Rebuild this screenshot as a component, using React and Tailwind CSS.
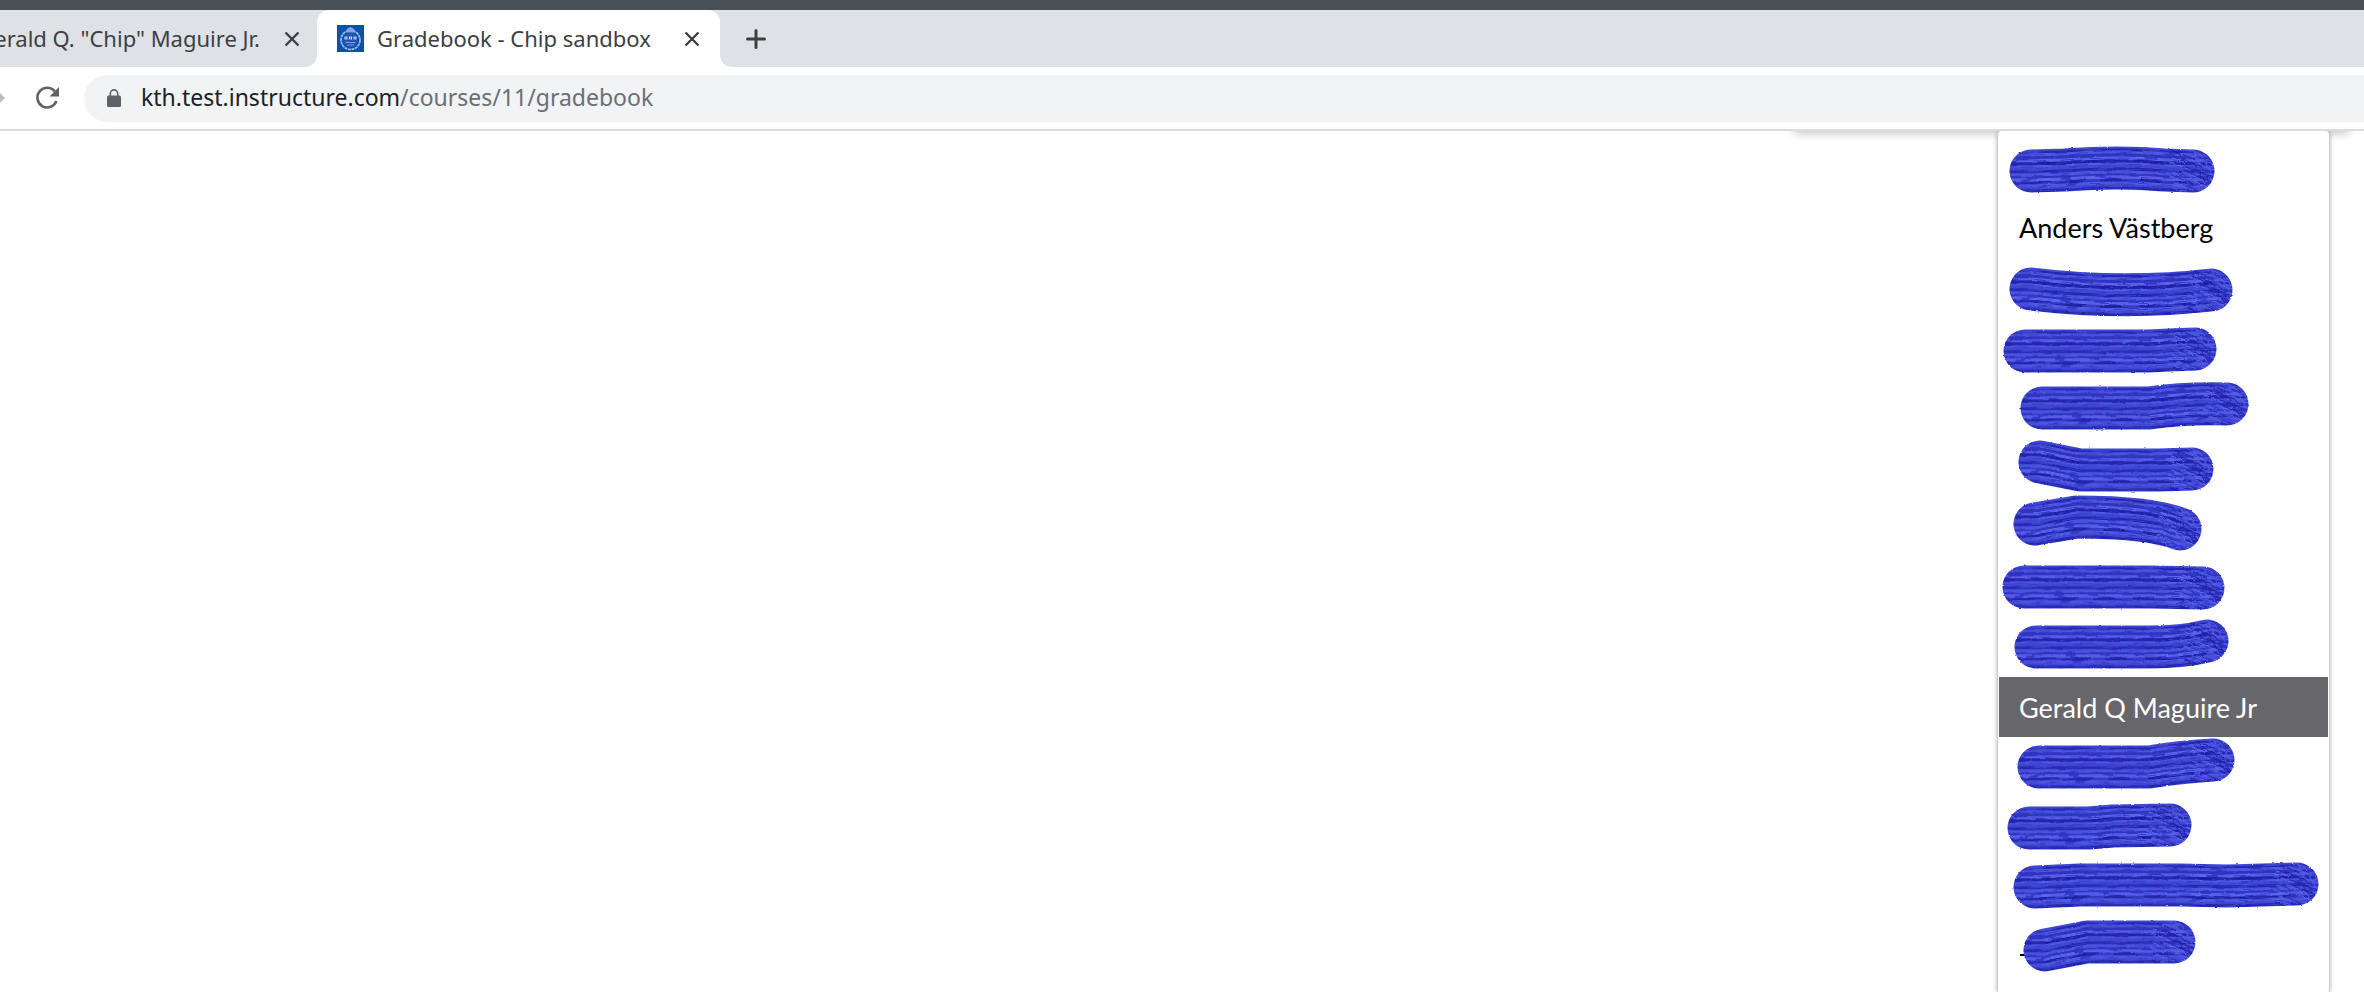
import React from 'react';

const NAMES = [
  { id: 'r0', from: [32, 34], mid: 'L66 33 Q120 29 165 33 L', to: [194, 34] },
  { id: 'r1', name: 'Anders Västberg' },
  { id: 'r2', from: [32, 32], mid: 'Q124 43', to: [212, 33] },
  { id: 'r3', from: [26, 34], mid: 'L150 34 L170 33 L', to: [196, 32] },
  { id: 'r4', from: [43, 31], mid: 'L150 31 Q185 26', to: [228, 27] },
  { id: 'r5', from: [41, 25], mid: 'L81 33 L160 33 L', to: [193, 32] },
  { id: 'r6', from: [36, 27], mid: 'L78 20 Q150 20', to: [181, 32] },
  { id: 'r7', from: [25, 30], mid: 'L150 30 L', to: [204, 31] },
  { id: 'r8', from: [37, 30], mid: 'L150 30 Q185 30', to: [208, 24] },
  { id: 'r9', name: 'Gerald Q Maguire Jr', selected: true },
  { id: 'r10', from: [40, 30], mid: 'L150 30 Q180 25', to: [214, 23] },
  { id: 'r11', from: [30, 31], mid: 'L90 31 L114 29 L', to: [171, 28] },
  { id: 'r12', from: [36, 30], mid: 'L81 28 L181 28 L228 29 L', to: [298, 27] },
  { id: 'r13', from: [46, 33], mid: 'L88 25 L', to: [175, 25], tick: true },
];

const SHADES = ['#1c1fa4', '#6068ee', '#2d32bd', '#525ae4', '#2226ad', '#444bd6', '#565ee6'];

// Bristle marks: vertical offset, colour, dash pattern and dash shift
const BRISTLES = Array.from({ length: 46 }, (_, i) => {
  const seed = (i * 7919 + 13) % 97;
  return {
    y: i - 23,
    color: SHADES[seed % 7],
    dash: `${14 + (seed % 41)} ${3 + (seed % 17)}`,
    shift: seed * 3,
  };
});

// Short slanted marks where the brush was lifted
const LIFTS = Array.from({ length: 110 }, (_, i) => ({
  x: ((i * 37) % 46) - 24,
  y: ((i * 29) % 44) - 22,
  len: 3 + (i % 5),
  color: SHADES[(i * 3) % 7],
}));

function Brush({ id, from, mid, to, tick }) {
  const stroke = `M${from[0]} ${from[1]} ${mid} ${to[0]} ${to[1]}`;
  const bristle = `M${from[0] - 24} ${from[1]} L${from[0]} ${from[1]} ${mid} ${to[0]} ${to[1]} L${to[0] + 24} ${to[1]}`;

  return (
    <svg className="block h-[60px] w-full overflow-visible" fill="none" aria-hidden="true">
      <defs>
        <filter id={`rough-${id}`} filterUnits="userSpaceOnUse" x="-10" y="-20" width="350" height="100">
          <feTurbulence type="fractalNoise" baseFrequency="0.25 0.6" numOctaves="2" seed="4" />
          <feDisplacementMap in="SourceGraphic" scale="2" xChannelSelector="R" yChannelSelector="G" />
        </filter>
        <mask id={`mask-${id}`} maskUnits="userSpaceOnUse" x="-10" y="-20" width="350" height="100">
          <path d={stroke} stroke="#fff" strokeWidth="43" strokeLinecap="round" strokeLinejoin="round" />
        </mask>
      </defs>
      {tick && <path d="M21 38h5" stroke="#000" strokeWidth="2" />}
      <g filter={`url(#rough-${id})`}>
        <g mask={`url(#mask-${id})`}>
          <path d={stroke} stroke="#363bc9" strokeWidth="46" strokeLinecap="round" strokeLinejoin="round" />
          {BRISTLES.map((b) => (
            <path
              key={b.y}
              d={bristle}
              transform={`translate(0 ${b.y})`}
              stroke={b.color}
              strokeWidth="1"
              strokeDasharray={b.dash}
              strokeDashoffset={b.shift}
            />
          ))}
          {LIFTS.map((l, i) => (
            <path
              key={i}
              d={`M${to[0] + l.x} ${to[1] + l.y}q${l.len} 0 ${l.len + 2} ${l.len - 1}`}
              stroke={l.color}
              strokeWidth="1"
            />
          ))}
        </g>
      </g>
    </svg>
  );
}

function CloseIcon() {
  return (
    <svg className="size-4" viewBox="0 0 16 16" fill="none" stroke="#3c4043" strokeWidth="2.4">
      <path d="M1.5 1.5l13 13M14.5 1.5l-13 13" />
    </svg>
  );
}

function KthIcon() {
  return (
    <svg className="size-[27px] shrink-0" viewBox="0 0 27 27" fill="none">
      <path d="M0 0h27v27H0z" fill="#0b51a8" />
      <circle cx="13.5" cy="15" r="9.5" stroke="#9db8ec" strokeWidth="1.8" strokeDasharray="3 .6" />
      <circle cx="13.5" cy="15" r="7.2" fill="#2457b4" />
      <path d="M9 5.5l1.5-2 3-1.5 3 1.5 1.5 2-1 2h-7z" fill="#86a5e4" />
      <path d="M7.5 13h3M12 13h3M16.5 13h3" stroke="#d4e0fa" strokeWidth="3" strokeDasharray="1.2 .6" />
      <path d="M8.5 17.5h10M10 20h7" stroke="#7f9fe0" strokeWidth="1" />
    </svg>
  );
}

export default function App() {
  return (
    <div className="flex h-screen flex-col overflow-hidden bg-white font-['Noto_Sans',sans-serif] text-[22px]">
      <div className="h-[10px] shrink-0 bg-[#495057]" />

      {/* Tab strip */}
      <div className="flex h-[57px] shrink-0 bg-white text-[#3c4043]">
        <div className="flex w-[317px] shrink-0 items-center justify-end gap-6 rounded-br-xl bg-[#dee1e6] pr-[17px]">
          <span className="whitespace-nowrap">erald Q. "Chip" Maguire Jr.</span>
          <button aria-label="Close tab">
            <CloseIcon />
          </button>
        </div>
        <div className="w-[403px] shrink-0 bg-linear-to-b from-[#dee1e6] from-50% to-white to-50%">
          <div className="flex h-full items-center rounded-t-xl bg-white px-5">
            <KthIcon />
            <span className="ml-[13px] flex-1 whitespace-nowrap">Gradebook - Chip sandbox</span>
            <button aria-label="Close tab">
              <CloseIcon />
            </button>
          </div>
        </div>
        <div className="flex flex-1 items-center rounded-bl-xl bg-[#dee1e6] pl-[26px]">
          <button aria-label="New tab">
            <svg className="size-5" viewBox="0 0 20 20" stroke="#3c4043" strokeWidth="3" strokeLinecap="round">
              <path d="M10 1.5v17M1.5 10h17" />
            </svg>
          </button>
        </div>
      </div>

      {/* Toolbar */}
      <div className="flex h-16 shrink-0 items-center border-b-2 border-[#dadce0]">
        <button aria-label="Forward" className="w-9">
          <svg className="h-3 w-[5px]" viewBox="0 0 5 12" fill="#babcbe">
            <path d="M0 1l5 5-5 5z" />
          </svg>
        </button>
        <button aria-label="Reload" className="w-12">
          <svg className="size-6" viewBox="0 0 24 24" fill="none">
            <path d="M20.4 15A9.8 9.8 0 1 1 18.8 5.4" stroke="#5f6368" strokeWidth="2.6" />
            <path d="M23 1v9.5h-9.5z" fill="#5f6368" />
          </svg>
        </button>
        <div className="flex h-[47px] flex-1 items-center rounded-l-full bg-[#f1f3f4] pl-[23px]">
          <svg className="mr-5 h-[18px] w-[14px]" viewBox="0 0 14 18" fill="none">
            <path d="M3.3 8V4.6a3.7 3.7 0 0 1 7.4 0V8" stroke="#5f6368" strokeWidth="1.6" />
            <rect y="6.5" width="14" height="11.5" rx="1.5" fill="#5f6368" />
          </svg>
          <a href="#gradebook" className="pb-[2px] text-[23px] whitespace-nowrap text-[#202124]">
            kth.test.instructure.com<span className="text-[#6b6f73]">/courses/11/gradebook</span>
          </a>
        </div>
      </div>

      {/* Page */}
      <main className="relative flex min-h-0 flex-1 justify-end overflow-hidden">
        <div className="absolute -top-3 right-[15px] h-3 w-[555px] shadow-[0_2px_10px_rgba(0,0,0,0.25)]" />
        <ul className="relative mr-[34px] h-full w-[333px] rounded-t border-x border-[#c7cdd1] bg-white px-px pt-[6px] font-[Lato,sans-serif] text-[27px] text-black shadow-[0_0_4px_rgba(0,0,0,0.3)]">
          {NAMES.map((row) => (
            <li key={row.id}>
              {row.name ? (
                <button
                  className={
                    row.selected
                      ? 'block h-[60px] w-full bg-[#66666b] px-5 pt-[2px] text-left text-white'
                      : 'block h-[60px] w-full px-5 pt-[2px] text-left'
                  }
                >
                  {row.name}
                </button>
              ) : (
                <Brush id={row.id} from={row.from} mid={row.mid} to={row.to} tick={row.tick} />
              )}
            </li>
          ))}
        </ul>
      </main>
    </div>
  );
}
